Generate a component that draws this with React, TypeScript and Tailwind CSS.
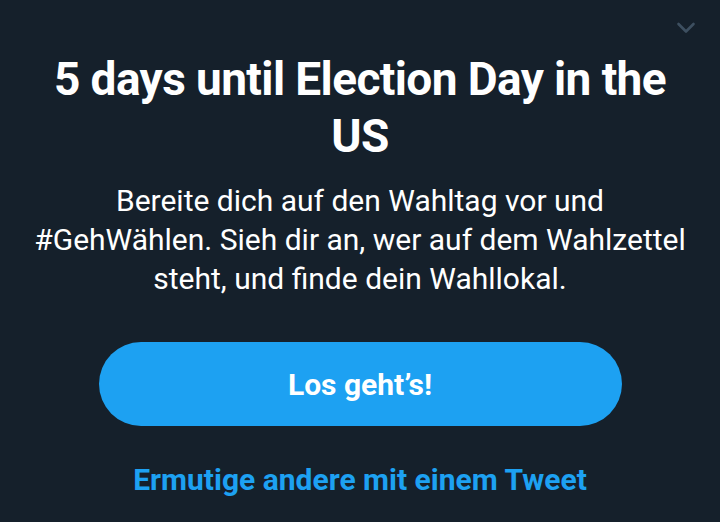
export default function App() {
  return (
    <div
      className="relative flex h-[522px] w-[720px] flex-col items-center overflow-hidden bg-[#15202b] text-white"
      style={{ fontFamily: 'Roboto, "Noto Sans", sans-serif' }}
    >
      <button
        type="button"
        aria-label="Ausblenden"
        className="absolute right-[22px] top-[15px] text-[#3d4f60]"
      >
        <svg
          viewBox="0 0 24 24"
          className="h-[24px] w-[24px]"
          fill="none"
          stroke="currentColor"
          strokeWidth={2.6}
          strokeLinecap="round"
          strokeLinejoin="round"
        >
          <path d="M4.5 9l7.5 7.5L19.5 9" />
        </svg>
      </button>

      <h1 className="mt-[51px] w-[640px] text-center text-[46px] font-bold leading-[57px] tracking-[-0.6px]">
        5 days until Election Day in the US
      </h1>

      <p className="mt-[16px] w-[664px] text-center text-[30px] leading-[39px]">
        Bereite dich auf den Wahltag vor und #GehWählen. Sieh dir an, wer auf dem Wahlzettel steht, und finde dein Wahllokal.
      </p>

      <button
        type="button"
        className="mt-[44px] flex h-[84px] w-[523px] items-center justify-center rounded-full bg-[#1da1f2] text-[30px] font-bold"
      >
        Los geht’s!
      </button>

      <a className="mt-[36px] text-[30px] font-bold leading-[35px] text-[#1da1f2]">
        Ermutige andere mit einem Tweet
      </a>
    </div>
  );
}
